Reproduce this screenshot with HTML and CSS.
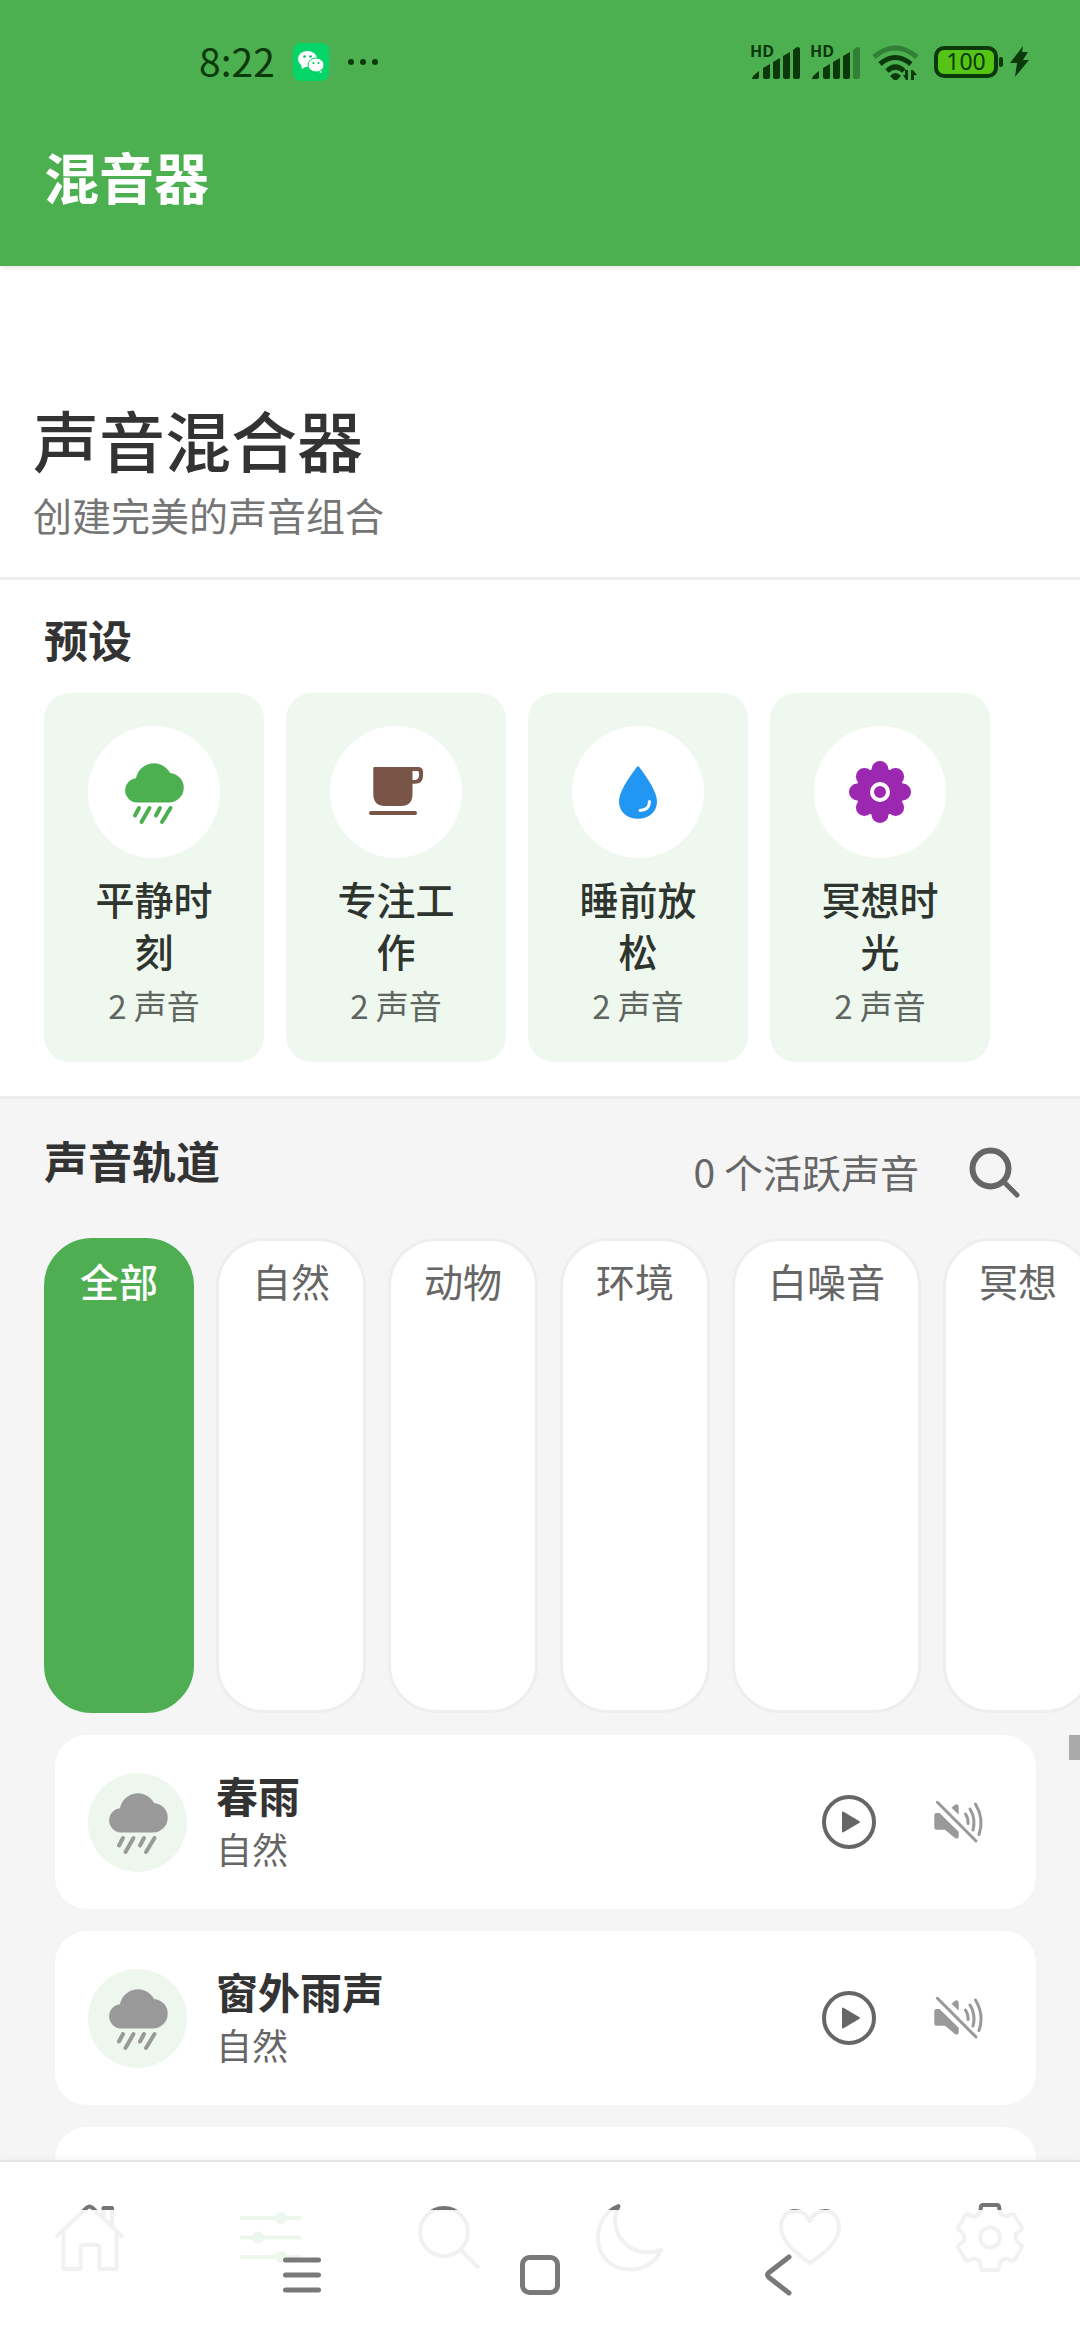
FILE: index.html
```html
<!DOCTYPE html>
<html lang="zh-CN">
<head>
<meta charset="utf-8">
<meta name="viewport" content="width=device-width, initial-scale=1">
<title>混音器</title>
<link rel="stylesheet" href="styles.css">
</head>
<body>
<svg class="defs" aria-hidden="true">
  <symbol id="rain" viewBox="0 0 66 66">
    <path fill="currentColor" d="M15.500 43.500A12.200 12.200 0 0 1 15 19.200A18.200 18.200 0 0 1 49 13.900A14.820 14.820 0 0 1 48 43.500Z"/>
    <path fill="none" stroke="currentColor" stroke-width="4" stroke-linecap="round" d="M18 49l-4 7.500M28.500 49l-8 14M39 49l-4 7.500M49.500 49l-8.500 14"/>
  </symbol>
  <symbol id="play" viewBox="0 0 56 56">
    <circle cx="28" cy="28" r="25" fill="none" stroke="currentColor" stroke-width="4"/>
    <path fill="currentColor" stroke="currentColor" stroke-width="2" stroke-linejoin="round" d="M22 18.500v19l16-9.500z"/>
  </symbol>
  <symbol id="mute" viewBox="0 0 56 56">
    <path fill="currentColor" d="M5.500 19H8.500L27.700 37.700V42.500Q27.500 45.500 24 44L14 35.700H5.500Q3.300 35.700 3.300 33.500V21.200Q3.300 19 5.500 19ZM20.500 13.700L24 10.800Q27.700 9 27.700 13V20.700Z"/>
    <path fill="none" stroke="currentColor" stroke-width="3" stroke-linecap="round" d="M6.400 8.300L45 47M34.500 20q3 4.500 2.500 9.500M39 15q6 10 3 21M44.500 10q9 15 3.500 30.500"/>
  </symbol>
  <symbol id="signal" viewBox="0 0 50 36">
    <path d="M2 35q0-3 7-8v6q0 2-2 2zM13 24l7-4v13q0 2-2 2h-3q-2 0-2-2zM23 18l7-4v19q0 2-2 2h-3q-2 0-2-2zM33 12l7-4v25q0 2-2 2h-3q-2 0-2-2z"/>
  </symbol>
</svg>

<div class="screen">
  <header class="top">
    <div class="status">
      <div class="status-left">
        <span class="time">8:22</span>
        <svg class="wechat" viewBox="0 0 36 38" aria-label="微信">
          <rect width="36" height="38" rx="8" fill="#05d469"/>
          <ellipse cx="14.500" cy="16" rx="9.500" ry="8" fill="#fff"/>
          <path fill="#fff" d="M8 21l1 5 5-3zM28 26l.500 4-5-2z"/>
          <ellipse cx="23" cy="22" rx="8" ry="7" fill="#fff" stroke="#05d469"/>
          <circle cx="11.500" cy="13.500" r="1.300" fill="#05c060"/><circle cx="17.500" cy="13.500" r="1.300" fill="#05c060"/>
          <circle cx="20.500" cy="20" r="1.100" fill="#05c060"/><circle cx="25.500" cy="20" r="1.100" fill="#05c060"/>
        </svg>
        <svg class="dots" viewBox="0 0 32 8" aria-hidden="true"><circle cx="4" cy="4" r="3"/><circle cx="16" cy="4" r="3"/><circle cx="28" cy="4" r="3"/></svg>
      </div>
      <div class="status-right">
        <svg class="sig" viewBox="0 0 50 36"><text class="hd" x="0" y="13">HD</text><use href="#signal" width="50" height="36"/><path d="M43 6l4-3q3 0 3 2v28q0 2-2 2h-3q-2 0-2-2z"/></svg>
        <svg class="sig" viewBox="0 0 50 36"><text class="hd" x="0" y="13">HD</text><use href="#signal" width="50" height="36"/><path opacity=".4" d="M43 6l4-3q3 0 3 2v28q0 2-2 2h-3q-2 0-2-2z"/></svg>
        <svg class="wifi" viewBox="0 0 48 36">
          <g fill="none" stroke="currentColor" stroke-width="5">
            <path opacity=".4" d="M2 13q21-18 43 0"/>
            <path d="M8 20q15-13 31 0"/>
            <path d="M15 27q8.500-8 17 0"/>
          </g>
          <path d="M18 32q5.500-6 11 0l-4 4h-3zM36 26v10h-2l-3-5h2v-5zM39 36V26h2l4 5h-3v5z"/>
        </svg>
        <svg class="battery" viewBox="0 0 70 32">
          <rect x="2" y="2" width="60" height="28" rx="8" fill="#55c414" stroke="#0b390c" stroke-width="4"/>
          <rect x="65" y="11" width="4" height="10" rx="2"/>
          <text class="pct" x="32" y="24" text-anchor="middle">100</text>
        </svg>
        <svg class="bolt" viewBox="0 0 20 32"><path d="M13 0L0 17h7L5 31 19 14h-6l5-8h-6z"/></svg>
      </div>
    </div>
    <h1 class="bar-title">混音器</h1>
  </header>

  <main class="content">
    <section class="hero">
      <h2 class="hero-title">声音混合器</h2>
      <p class="hero-sub">创建完美的声音组合</p>
    </section>

    <section class="presets">
      <h3 class="section-title">预设</h3>
      <div class="preset-row">
        <button class="preset">
          <span class="disc green"><svg><use href="#rain"/></svg></span>
          <span class="preset-name">平静时刻</span>
          <span class="preset-count">2 声音</span>
        </button>
        <button class="preset">
          <span class="disc brown"><svg viewBox="0 0 66 66">
            <path fill="currentColor" fill-rule="evenodd" d="M11.500 8H55Q60 8 60 13V17Q60 24.700 52 24.700H49.500V35Q49.500 47 38 47H22Q10.300 47 10.300 35V9.200Q10.300 8 11.500 8ZM49.500 12V21H51.500Q56 21 56 16V14Q56 12 54.500 12Z"/>
            <path stroke="currentColor" stroke-width="4" stroke-linecap="round" d="M8 54h44"/>
          </svg></span>
          <span class="preset-name">专注工作</span>
          <span class="preset-count">2 声音</span>
        </button>
        <button class="preset">
          <span class="disc blue"><svg viewBox="0 0 66 66">
            <path fill="currentColor" d="M33 7.300Q34 7.300 35 9C43 20 52 33 52 42.500C52 53 44 59.700 33 59.700C22 59.700 14 53 14 42.500C14 33 23 20 31 9Q32 7.300 33 7.300Z"/>
            <path fill="none" stroke="#fff" stroke-width="3" stroke-linecap="round" d="M44.500 42.500Q44.500 51 35 51.500"/>
          </svg></span>
          <span class="preset-name">睡前放松</span>
          <span class="preset-count">2 声音</span>
        </button>
        <button class="preset">
          <span class="disc purple"><svg viewBox="0 0 66 66">
            <g fill="currentColor"><circle cx="33" cy="33" r="24"/>
            <circle cx="33" cy="10.500" r="8.500"/><circle cx="33" cy="55.500" r="8.500"/><circle cx="10.500" cy="33" r="8.500"/><circle cx="55.500" cy="33" r="8.500"/>
            <circle cx="17.400" cy="17.400" r="8.500"/><circle cx="48.600" cy="17.400" r="8.500"/><circle cx="17.400" cy="48.600" r="8.500"/><circle cx="48.600" cy="48.600" r="8.500"/></g>
            <circle cx="33" cy="33" r="8" fill="none" stroke="#fff" stroke-width="4"/>
          </svg></span>
          <span class="preset-name">冥想时光</span>
          <span class="preset-count">2 声音</span>
        </button>
      </div>
    </section>

    <section class="tracks">
      <div class="tracks-head">
        <h3 class="section-title">声音轨道</h3>
        <span class="active-count">0 个活跃声音</span>
        <button class="search" aria-label="搜索"><svg viewBox="0 0 52 52" fill="none" stroke="currentColor" stroke-linecap="round"><circle cx="22.500" cy="22.500" r="18" stroke-width="6"/><path stroke-width="5" d="M36 36l13 13"/></svg></button>
      </div>
      <div class="chips">
        <button class="chip active">全部</button>
        <button class="chip">自然</button>
        <button class="chip">动物</button>
        <button class="chip">环境</button>
        <button class="chip">白噪音</button>
        <button class="chip">冥想</button>
      </div>
      <div class="list-wrap">
        <ul class="list">
          <li class="track">
            <span class="track-icon"><svg><use href="#rain"/></svg></span>
            <div class="track-text"><div class="track-name">春雨</div><div class="track-cat">自然</div></div>
            <button class="act play" aria-label="播放"><svg><use href="#play"/></svg></button>
            <button class="act mute" aria-label="静音"><svg><use href="#mute"/></svg></button>
          </li>
          <li class="track">
            <span class="track-icon"><svg><use href="#rain"/></svg></span>
            <div class="track-text"><div class="track-name">窗外雨声</div><div class="track-cat">自然</div></div>
            <button class="act play" aria-label="播放"><svg><use href="#play"/></svg></button>
            <button class="act mute" aria-label="静音"><svg><use href="#mute"/></svg></button>
          </li>
          <li class="track"></li>
        </ul>
        <span class="thumb"></span>
      </div>
    </section>
  </main>

  <footer class="bottom">
    <nav class="tabs">
      <a class="tab" href="#home" aria-label="首页"><svg viewBox="0 0 72 72"><path d="M2 35L33 5.500Q35.500 3.500 38 5.500L69 35M9.500 30V67H26.500V45.500Q26.500 43 29 43H43Q45.500 43 45.500 45.500V67H62.500V30M49.500 15V6H58V23"/></svg></a>
      <a class="tab current" href="#mixer" aria-label="混音器"><svg viewBox="0 0 72 72"><path d="M6 16H67M6 35.500H67M6 55H67"/><circle cx="47" cy="16" r="4"/><circle cx="24" cy="35.500" r="4"/><circle cx="47" cy="55" r="4"/></svg></a>
      <a class="tab" href="#search" aria-label="搜索"><svg viewBox="0 0 72 72"><circle cx="30" cy="30" r="24"/><path d="M47 48L65 66"/></svg></a>
      <a class="tab" href="#sleep" aria-label="睡眠"><svg viewBox="0 0 72 72"><path d="M24.500 4C10 10 4 23 4 36C4 55 18 67.500 36 67.500C50 67.500 62 60 67 48C40 57 21 38 21 18C21 12 23 8 24.500 4Z"/></svg></a>
      <a class="tab" href="#favorites" aria-label="收藏"><svg viewBox="0 0 72 72"><path d="M36 61C20 50 7 39 7 25C7 15 13 9 21 9C28 9 33 13 36 19C39 13 44 9 51 9C59 9 65 15 65 25C65 39 52 50 36 61Z"/></svg></a>
      <a class="tab" href="#settings" aria-label="设置"><svg viewBox="0 0 72 72"><circle cx="36" cy="35.500" r="10"/><g transform="translate(36 35.500)">
        <path id="tooth" d="M-10-24L-9-31Q-8.500-32.500-7-32.500H7Q8.500-32.500 9-31L10-24L15.800-20.700"/>
        <use href="#tooth" transform="rotate(60)"/><use href="#tooth" transform="rotate(120)"/><use href="#tooth" transform="rotate(180)"/><use href="#tooth" transform="rotate(240)"/><use href="#tooth" transform="rotate(300)"/></g></svg></a>
    </nav>
    <div class="sysnav">
      <button aria-label="最近任务"><svg viewBox="0 0 44 44"><path d="M5.500 7H38.500M5.500 22H38.500M5.500 37H38.500"/></svg></button>
      <button aria-label="主屏幕"><svg viewBox="0 0 44 44"><rect x="4.500" y="4.500" width="35" height="35" rx="7"/></svg></button>
      <button aria-label="返回"><svg viewBox="0 0 44 44"><path d="M33 4L13 19.500Q10 22 13 24.500L33 40"/></svg></button>
    </div>
  </footer>
</div>
</body>
</html>
```
FILE: styles.css
```css
* { box-sizing: border-box; margin: 0; padding: 0; }

body {
  font-family: "Noto Sans CJK SC", "Noto Sans", sans-serif;
  color: #333;
  background: #fff;
}

button {
  border: 0;
  background: none;
  font: inherit;
  color: inherit;
}

svg { display: block; flex: none; }
.defs { position: absolute; width: 0; height: 0; }

.screen {
  height: 100vh;
  display: flex;
  flex-direction: column;
  overflow: hidden;
}

/* status bar and app bar */
.top {
  position: relative;
  flex: none;
  background: #4db050;
  color: #fff;
  box-shadow: 0 1px 6px rgba(0, 0, 0, .12);
}

.status {
  height: 124px;
  padding: 0 50px 0 199px;
  display: flex;
  align-items: center;
  justify-content: space-between;
  color: #0b390c;
}

.status svg { fill: currentColor; }
.status-left, .status-right { display: flex; align-items: center; }
.status-left { gap: 18px; }
.time { padding-bottom: 4px; font-size: 39px; line-height: 48px; }
.wechat { width: 36px; height: 38px; }
.dots { width: 32px; height: 8px; }
.sig { width: 50px; height: 36px; margin-right: 10px; overflow: visible; }
.hd { font: 700 16px "Open Sans", sans-serif; }
.wifi { width: 48px; height: 36px; margin: 0 14px 0 2px; }
.battery { width: 70px; height: 32px; }
.pct { font: 400 23px "Noto Sans", sans-serif; }
.bolt { width: 20px; height: 32px; margin-left: 6px; }

.bar-title {
  padding: 15px 44px 55px;
  font-size: 55px;
  line-height: 72px;
  font-weight: 700;
}

/* content */
.content {
  flex: 1;
  min-height: 0;
  display: flex;
  flex-direction: column;
  overflow: hidden;
  background: #f5f5f5;
}

.hero {
  flex: none;
  padding: 132px 33px 33px;
  background: #fff;
  border-bottom: 3px solid #ededed;
}

.hero-title { font-size: 66px; line-height: 80px; font-weight: 500; }
.hero-sub { margin-top: 6px; font-size: 39px; line-height: 60px; color: #757575; }

.section-title { font-size: 44px; line-height: 60px; font-weight: 700; }

.presets {
  flex: none;
  padding: 29px 44px 34px;
  background: #fff;
  border-bottom: 3px solid #ededed;
}

.preset-row { display: flex; gap: 22px; margin-top: 24px; }

.preset {
  width: 220px;
  padding: 33px;
  display: flex;
  flex-direction: column;
  align-items: center;
  border-radius: 26px;
  background: #eff8ef;
}

.disc {
  width: 132px;
  height: 132px;
  display: grid;
  place-items: center;
  border-radius: 50%;
  background: #fff;
}

.disc svg { width: 66px; height: 66px; }
.green { color: #4caf50; }
.brown { color: #795548; }
.blue { color: #2196f3; }
.purple { color: #9c27b0; }

.preset-name {
  margin: 14px 0 7px;
  font-size: 39px;
  line-height: 52px;
  font-weight: 500;
  color: #2e352f;
}

.preset-count { padding-bottom: 2px; font-size: 33px; line-height: 44px; color: #5f665f; }

/* tracks */
.tracks { padding-top: 31px; }

.tracks-head {
  display: flex;
  align-items: center;
  padding: 0 44px;
}

.tracks-head .section-title { align-self: flex-start; }

.active-count {
  margin: 0 33px 0 auto;
  padding-bottom: 3px;
  font-size: 39px;
  line-height: 52px;
  color: #666;
}

.search {
  width: 84px;
  height: 84px;
  display: grid;
  place-items: center;
  color: #666;
}

.search svg { width: 52px; height: 52px; }

.chips {
  display: flex;
  gap: 22px;
  min-height: 475px;
  margin: 24px 0 22px;
  padding-left: 44px;
  overflow: hidden;
}

.chip {
  flex: none;
  display: flex;
  align-items: flex-start;
  padding: 13px 33px;
  border: 3px solid #eee;
  border-radius: 48px;
  background: #fff;
  font-size: 39px;
  line-height: 52px;
  color: #666;
}

.chip.active {
  border-color: #4fae52;
  background: #4fae52;
  color: #fff;
  font-weight: 500;
}

.list-wrap { position: relative; padding: 0 44px 0 55px; }

.list {
  display: flex;
  flex-direction: column;
  gap: 22px;
  list-style: none;
}

.track {
  display: flex;
  align-items: center;
  min-height: 174px;
  padding: 31px 33px;
  border-radius: 32px;
  background: #fff;
}

.track-icon {
  width: 99px;
  height: 99px;
  display: grid;
  place-items: center;
  border-radius: 50%;
  background: #edf7ee;
  color: #999;
}

.track-icon svg { width: 66px; height: 66px; }
.track-text { flex: 1; padding: 0 0 3px 29px; }
.track-name { font-size: 42px; line-height: 55px; font-weight: 700; }
.track-cat { font-size: 36px; line-height: 53px; color: #666; }

.act {
  width: 88px;
  height: 88px;
  display: grid;
  place-items: center;
}

.act svg { width: 56px; height: 56px; }
.play { margin-right: 22px; color: #666; }
.mute { color: #999; }

.thumb {
  position: absolute;
  top: 0;
  right: 0;
  width: 11px;
  height: 25px;
  background: #aaa;
}

/* bottom tabs, with the system bar lying over them */
.bottom {
  position: relative;
  flex: none;
  background: #fff;
  border-top: 2px solid #e6e6e6;
  box-shadow: 0 0 8px rgba(0, 0, 0, .05);
}

.tabs {
  display: grid;
  grid-template-columns: repeat(6, 1fr);
  padding: 40px 0 66px;
}

.tab { display: grid; place-items: center; color: #757575; }
.tab.current { color: #4caf50; }

.tab svg {
  width: 72px;
  height: 72px;
  fill: none;
  stroke: currentColor;
  stroke-width: 4px;
  stroke-linejoin: round;
}

.sysnav {
  position: absolute;
  left: 0;
  right: 0;
  bottom: 0;
  height: 130px;
  display: flex;
  align-items: center;
  justify-content: center;
  gap: 194px;
  background: rgba(255, 255, 255, .9);
}

.sysnav svg {
  width: 44px;
  height: 44px;
  fill: none;
  stroke: #7a7878;
  stroke-width: 5px;
  stroke-linecap: round;
  stroke-linejoin: round;
}
```
